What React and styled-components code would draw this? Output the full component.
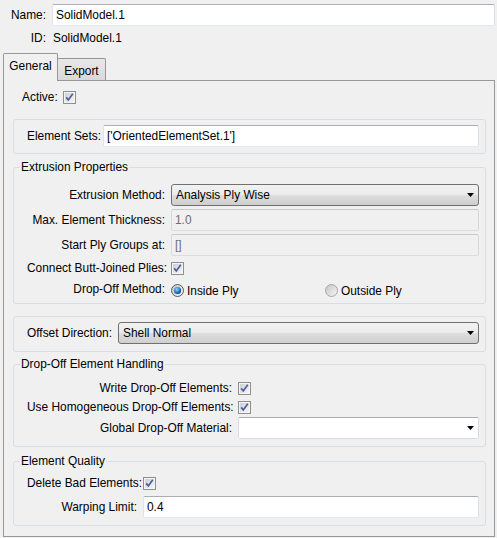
import React from 'react';
import styled, { createGlobalStyle } from 'styled-components';

const GlobalStyle = createGlobalStyle`
  html, body {
    margin: 0;
    background: #f0f0f0;
  }
  body {
    font-family: "Liberation Sans", Arial, sans-serif;
    font-size: 11.9px;
    color: #000;
  }
`;

const Page = styled.div`
  box-sizing: border-box;
  width: 497px;
  height: 538px;
  padding: 4px 2px 0 3px;
  background: #f0f0f0;
`;

const Header = styled.div`
  display: grid;
  grid-template-columns: 38px 1fr;
  column-gap: 6px;
  row-gap: 3px;
  padding-left: 5px;
  align-items: center;
`;

const Label = styled.span`
  text-align: right;
  white-space: nowrap;
  line-height: 14px;
`;

const Value = styled.span`
  height: 18px;
  line-height: 18px;
  padding-left: 1px;
`;

const TextField = styled.input`
  box-sizing: border-box;
  width: 100%;
  height: 22px;
  margin: 0;
  padding: 0 3px;
  font: inherit;
  color: ${({ disabled }) => (disabled ? '#6d6d6d' : '#000')};
  background: ${({ disabled }) => (disabled ? '#f0f0f0' : '#fff')};
  border: 1px solid;
  border-color: ${({ disabled }) =>
    disabled ? '#c9c9c9 #d9d9d9 #dcdcdc #d9d9d9' : '#abadb3 #dbdfe6 #e3e9ef #e2e3ea'};
  border-radius: 2px;
  outline: none;
`;

const TabBar = styled.div`
  display: flex;
  align-items: flex-end;
  height: 27px;
  margin-top: 6px;
`;

const Tab = styled.div`
  position: relative;
  box-sizing: border-box;
  display: flex;
  align-items: center;
  justify-content: center;
  border: 1px solid #979797;
  border-bottom: none;
  border-radius: 2px 2px 0 0;
  ${({ $active }) =>
    $active
      ? `
    z-index: 1;
    width: 55px;
    height: 28px;
    margin-bottom: -1px;
    padding-bottom: 3px;
    background: #f0f0f0;
  `
      : `
    width: 49px;
    height: 22px;
    margin-left: -1px;
    padding-top: 2px;
    background: linear-gradient(#e8e8e8, #d9d9d9);
  `}
`;

const Pane = styled.div`
  box-sizing: border-box;
  height: 457px;
  border: 1px solid #979797;
  padding: 6px 8px 0 9px;
`;

const ActiveRow = styled.div`
  display: flex;
  align-items: center;
  gap: 5px;
  height: 20px;
  padding-left: 9px;
`;

const Box = styled.div`
  margin-top: ${({ $mt }) => $mt}px;
  border: 1px solid #d5dfe5;
  border-radius: 3px;
`;

const Group = styled.fieldset`
  margin: ${({ $mt }) => $mt}px 0 0;
  padding: 0;
  min-width: 0;
  border: 1px solid #d5dfe5;
  border-radius: 3px;
`;

const Legend = styled.legend`
  margin-left: 6px;
  padding: 0 1px;
  line-height: 14px;
`;

const Form = styled.div`
  display: grid;
  grid-template-columns: ${({ $lw }) => $lw}px 1fr;
  column-gap: 6px;
  row-gap: ${({ $gap }) => $gap || 0}px;
  align-items: center;
  padding: ${({ $pad }) => $pad};
`;

const Cell = styled.div`
  display: flex;
  align-items: center;
  height: ${({ $h }) => $h || 18}px;
`;

const Combo = styled.div`
  box-sizing: border-box;
  display: flex;
  align-items: center;
  justify-content: space-between;
  height: 22px;
  padding: 0 4px 0 4px;
  border: 1px solid ${({ $plain }) => ($plain ? '#d9dde3' : '#707070')};
  border-top-color: ${({ $plain }) => ($plain ? '#abadb3' : '#707070')};
  border-radius: ${({ $plain }) => ($plain ? 2 : 3)}px;
  background: ${({ $plain }) =>
    $plain ? '#fff' : 'linear-gradient(#f2f2f2 0%, #ebebeb 48%, #dddddd 52%, #cfcfcf 100%)'};
`;

const Radios = styled.div`
  flex: 1;
  display: grid;
  grid-template-columns: 1fr 1fr;
  align-items: center;
`;

const RadioItem = styled.label`
  display: flex;
  align-items: center;
  gap: 3px;
  padding-top: 3px;
`;

const Arrow = () => (
  <svg width="7" height="4" viewBox="0 0 7 4">
    <path d="M0 0H7L3.5 4Z" fill="#000" />
  </svg>
);

const Check = () => (
  <svg width="13" height="13" viewBox="0 0 13 13">
    <defs>
      <linearGradient id="cbg" x1="0" y1="0" x2="1" y2="1">
        <stop offset="0" stopColor="#cbcfd5" />
        <stop offset="1" stopColor="#f6f6f6" />
      </linearGradient>
    </defs>
    <rect x="0.5" y="0.5" width="12" height="12" fill="#f4f4f4" stroke="#8e8f8f" />
    <rect x="2" y="2" width="9" height="9" fill="url(#cbg)" />
    <path d="M3.2 6.4L5.3 8.9L9.8 2.8" fill="none" stroke="#4a5f9c" strokeWidth="1.7" />
  </svg>
);

const Radio = ({ on }) => (
  <svg width="13" height="13" viewBox="0 0 13 13">
    <defs>
      <linearGradient id="rbg" x1="0" y1="0" x2="1" y2="1">
        <stop offset="0" stopColor="#c4c4c4" />
        <stop offset="1" stopColor="#f7f7f7" />
      </linearGradient>
      <radialGradient id="rdot" cx="0.4" cy="0.35" r="0.7">
        <stop offset="0" stopColor="#9ddcff" />
        <stop offset="0.5" stopColor="#2a8ad4" />
        <stop offset="1" stopColor="#0c3d78" />
      </radialGradient>
    </defs>
    <circle cx="6.5" cy="6.5" r="6" fill="url(#rbg)" stroke={on ? '#5a5a5a' : '#a6a6a6'} />
    {on && <circle cx="6.5" cy="6.5" r="3.6" fill="url(#rdot)" />}
  </svg>
);

const App = () => (
  <Page>
    <GlobalStyle />
    <Header>
      <Label>Name:</Label>
      <TextField readOnly defaultValue="SolidModel.1" />
      <Label>ID:</Label>
      <Value>SolidModel.1</Value>
    </Header>

    <TabBar>
      <Tab $active>General</Tab>
      <Tab>Export</Tab>
    </TabBar>

    <Pane>
      <ActiveRow>
        <Label>Active:</Label>
        <Check />
      </ActiveRow>

      <Box $mt={12}>
        <Form $lw={70} $pad="5px 6px 6px 13px">
          <Label>Element Sets:</Label>
          <TextField readOnly defaultValue="['OrientedElementSet.1']" />
        </Form>
      </Box>

      <Group $mt={6}>
        <Legend>Extrusion Properties</Legend>
        <Form $lw={138} $gap={3} $pad="10px 6px 5px 13px">
          <Label>Extrusion Method:</Label>
          <Combo>
            Analysis Ply Wise
            <Arrow />
          </Combo>
          <Label>Max. Element Thickness:</Label>
          <TextField disabled defaultValue="1.0" />
          <Label>Start Ply Groups at:</Label>
          <TextField disabled defaultValue="[]" />
          <Label>Connect Butt-Joined Plies:</Label>
          <Cell>
            <Check />
          </Cell>
          <Label>Drop-Off Method:</Label>
          <Cell>
            <Radios>
              <RadioItem>
                <Radio on />
                Inside Ply
              </RadioItem>
              <RadioItem>
                <Radio />
                Outside Ply
              </RadioItem>
            </Radios>
          </Cell>
        </Form>
      </Group>

      <Box $mt={12}>
        <Form $lw={85} $pad="5px 6px 7px 13px">
          <Label>Offset Direction:</Label>
          <Combo>
            Shell Normal
            <Arrow />
          </Combo>
        </Form>
      </Box>

      <Group $mt={5}>
        <Legend>Drop-Off Element Handling</Legend>
        <Form $lw={205} $gap={1} $pad="8px 6px 7px 13px">
          <Label>Write Drop-Off Elements:</Label>
          <Cell>
            <Check />
          </Cell>
          <Label>Use Homogeneous Drop-Off Elements:</Label>
          <Cell>
            <Check />
          </Cell>
          <Label>Global Drop-Off Material:</Label>
          <Combo $plain>
            <span />
            <Arrow />
          </Combo>
        </Form>
      </Group>

      <Group $mt={7}>
        <Legend>Element Quality</Legend>
        <Form $lw={110} $gap={4} $pad="6px 6px 7px 13px">
          <Label>Delete Bad Elements:</Label>
          <Cell>
            <Check />
          </Cell>
          <Label>Warping Limit:</Label>
          <TextField readOnly defaultValue="0.4" />
        </Form>
      </Group>
    </Pane>
  </Page>
);

export default App;
